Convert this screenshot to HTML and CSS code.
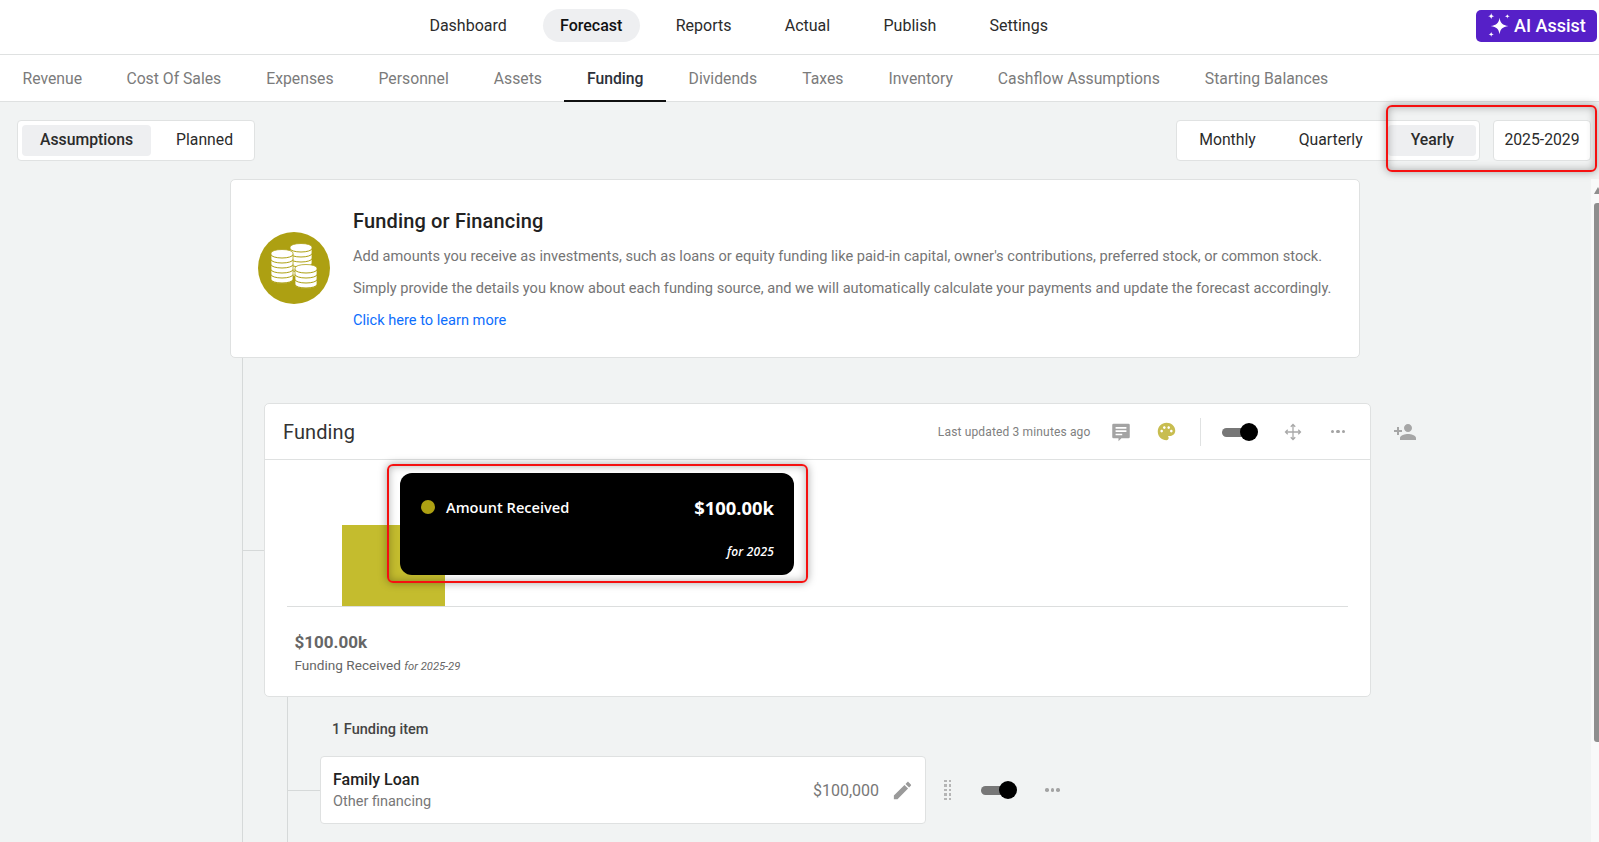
FILE: index.html
```html
<!DOCTYPE html>
<html lang="en">
<head>
<meta charset="utf-8">
<title>Forecast - Funding</title>
<link rel="stylesheet" href="styles.css">
</head>
<body>
<header class="topbar">
  <nav class="mainnav">
    <a class="mainnav-item">Dashboard</a>
    <a class="mainnav-item is-active">Forecast</a>
    <a class="mainnav-item">Reports</a>
    <a class="mainnav-item">Actual</a>
    <a class="mainnav-item">Publish</a>
    <a class="mainnav-item">Settings</a>
  </nav>
  <button class="ai-btn">
    <svg class="ai-icon" viewBox="0 0 24 24"><path d="M13 4.500c.9 5.300 2.600 7 8.500 8-5.900 1-7.600 2.700-8.500 8-.9-5.300-2.600-7-8.500-8 5.900-1 7.600-2.700 8.500-8z"/><path d="M5 0c.3 2 .9 2.700 3 3-2.100.3-2.700 1-3 3-.3-2-.9-2.700-3-3 2.100-.3 2.700-1 3-3z"/><path d="M20.500 1c.2 1.400.7 1.900 2.500 2.200-1.800.3-2.300.8-2.500 2.200-.2-1.400-.7-1.900-2.500-2.200 1.800-.3 2.300-.8 2.500-2.200z"/><path d="M5 18c.2 1.500.7 2 2.500 2.500C5.700 21 5.200 21.500 5 23c-.2-1.500-.7-2-2.500-2.500C4.300 20 4.800 19.500 5 18z"/></svg>
    AI Assist
  </button>
</header>

<nav class="subnav">
  <a class="subnav-item">Revenue</a>
  <a class="subnav-item">Cost Of Sales</a>
  <a class="subnav-item">Expenses</a>
  <a class="subnav-item">Personnel</a>
  <a class="subnav-item">Assets</a>
  <a class="subnav-item is-active">Funding</a>
  <a class="subnav-item">Dividends</a>
  <a class="subnav-item">Taxes</a>
  <a class="subnav-item">Inventory</a>
  <a class="subnav-item">Cashflow Assumptions</a>
  <a class="subnav-item">Starting Balances</a>
</nav>

<section class="toolbar">
  <div class="segment">
    <span class="segment-item is-active">Assumptions</span>
    <span class="segment-item">Planned</span>
  </div>
  <div class="toolbar-right">
    <div class="segment">
      <span class="segment-item">Monthly</span>
      <span class="segment-item">Quarterly</span>
      <span class="segment-item segment-item-wide is-active">Yearly</span>
    </div>
    <div class="year-box">2025-2029</div>
  </div>
</section>

<section class="info-card">
  <svg class="coins" viewBox="0 0 72 72">
    <defs>
      <g id="coin-stack">
        <path class="coin-body" d="M0 0v27a11 3.500 0 0 0 22 0V0a11 3.500 0 0 0-22 0z"/>
        <path class="coin-line" d="M0 1.500a11 3.500 0 0 0 22 0M0 6.500a11 3.500 0 0 0 22 0M0 11.500a11 3.500 0 0 0 22 0M0 16.500a11 3.500 0 0 0 22 0M0 21.500a11 3.500 0 0 0 22 0M0 26.500a11 3.500 0 0 0 22 0"/>
      </g>
    </defs>
    <circle cx="36" cy="36" r="36" class="coin-bg"/>
    <use href="#coin-stack" x="32" y="15"/>
    <use href="#coin-stack" x="13" y="21"/>
    <path class="coin-body" d="M37 36v17a11 3.500 0 0 0 22 0V36a11 3.500 0 0 0-22 0z"/>
    <path class="coin-line" d="M37 37.500a11 3.500 0 0 0 22 0M37 42.500a11 3.500 0 0 0 22 0M37 47.500a11 3.500 0 0 0 22 0M37 52.500a11 3.500 0 0 0 22 0"/>
  </svg>
  <div class="info-text">
    <h1 class="info-title">Funding or Financing</h1>
    <p class="info-line">Add amounts you receive as investments, such as loans or equity funding like paid-in capital, owner's contributions, preferred stock, or common stock.</p>
    <p class="info-line">Simply provide the details you know about each funding source, and we will automatically calculate your payments and update the forecast accordingly.</p>
    <a class="info-link">Click here to learn more</a>
  </div>
</section>

<main class="tree">
  <div class="panel-row">
    <section class="panel">
      <header class="panel-head">
        <h2 class="panel-title">Funding</h2>
        <div class="panel-tools">
          <span class="updated">Last updated 3 minutes ago</span>
          <svg class="icon icon-comment" viewBox="0 0 24 24"><path fill-rule="evenodd" d="M3 2h18a1.500 1.500 0 0 1 1.500 1.500v14.500a1.500 1.500 0 0 1-1.500 1.500h-8.500l-3.500 3.500v-3.500H3A1.500 1.500 0 0 1 1.500 18V3.500A1.500 1.500 0 0 1 3 2zm2.500 4v2h13V6zm0 4v2h13v-2zm0 4v2h8v-2z"/></svg>
          <svg class="icon icon-palette" viewBox="0 0 24 24"><path d="M12 2C6.490 2 2 6.490 2 12s4.490 10 10 10c1.380 0 2.500-1.120 2.500-2.500 0-.61-.23-1.200-.64-1.670-.08-.1-.13-.21-.13-.33 0-.28.22-.5.5-.5H16c3.310 0 6-2.690 6-6 0-4.960-4.490-9-10-9zm5.500 11c-.83 0-1.500-.67-1.500-1.500s.67-1.500 1.500-1.500 1.500.67 1.500 1.500-.67 1.500-1.500 1.500zm-3-4c-.83 0-1.500-.67-1.500-1.500S13.670 6 14.500 6s1.500.67 1.500 1.500S15.330 9 14.500 9zM5 11.500c0-.83.67-1.500 1.500-1.500s1.500.67 1.500 1.500S7.330 13 6.500 13 5 12.330 5 11.500zm6-4c0 .83-.67 1.500-1.500 1.500S8 8.330 8 7.500 8.670 6 9.500 6s1.500.67 1.500 1.500z"/></svg>
          <span class="tools-divider"></span>
          <span class="toggle"><span class="toggle-knob"></span></span>
          <svg class="icon icon-move" viewBox="0 0 24 24"><path d="M12 2v20M2 12h20M9 5l3-3 3 3M9 19l3 3 3-3M5 9l-3 3 3 3M19 9l3 3-3 3"/></svg>
          <span class="dots"><i></i><i></i><i></i></span>
        </div>
      </header>
      <div class="chart">
        <div class="plot"><div class="bar"></div></div>
        <div class="tooltip">
          <div class="tooltip-top">
            <span class="tooltip-dot"></span>
            <span class="tooltip-label">Amount Received</span>
            <span class="tooltip-value">$100.00k</span>
          </div>
          <div class="tooltip-period">for 2025</div>
        </div>
        <div class="highlight highlight-tooltip"></div>
      </div>
      <div class="summary">
        <div class="summary-value">$100.00k</div>
        <div class="summary-label">Funding Received <em>for 2025-29</em></div>
      </div>
    </section>
    <svg class="icon icon-person" viewBox="0 0 24 24"><path d="M15 12c2.210 0 4-1.790 4-4s-1.790-4-4-4-4 1.790-4 4 1.790 4 4 4zm-9-2V7H4v3H1v2h3v3h2v-3h3v-2H6zm9 4c-2.670 0-8 1.340-8 4v2h16v-2c0-2.660-5.330-4-8-4z"/></svg>
  </div>

  <div class="items">
    <div class="items-count">1 Funding item</div>
    <div class="item-row">
      <article class="item-card">
        <div>
          <div class="item-name">Family Loan</div>
          <div class="item-type">Other financing</div>
        </div>
        <div class="item-right">
          <span class="item-amount">$100,000</span>
          <svg class="icon icon-edit" viewBox="0 0 24 24"><path d="M3 17.250V21h3.750L17.810 9.940l-3.750-3.750L3 17.250zM20.710 7.040c.39-.39.39-1.020 0-1.410l-2.340-2.340c-.39-.39-1.020-.39-1.410 0l-1.830 1.830 3.750 3.750 1.830-1.830z"/></svg>
        </div>
      </article>
      <span class="drag"><i></i><i></i><i></i><i></i><i></i><i></i><i></i><i></i><i></i><i></i></span>
      <span class="toggle toggle-item"><span class="toggle-knob"></span></span>
      <span class="dots dots-item"><i></i><i></i><i></i></span>
    </div>
  </div>
</main>

<div class="highlight highlight-year"></div>
<div class="scrollbar"><span class="scroll-arrow"></span><span class="scroll-thumb"></span></div>
</body>
</html>
```
FILE: styles.css
```css
* { box-sizing: border-box; }
html, body { height: 842px; overflow: hidden; }
body {
  margin: 0;
  position: relative;
  background: #f1f3f3;
  font-family: Roboto, "Liberation Sans", sans-serif;
  font-size: 16px;
  color: #222;
}

.topbar {
  height: 55px;
  background: #fff;
  border-bottom: 1px solid #dfe1e1;
  display: flex;
  align-items: center;
  padding: 0 2px 3px 412px;
}
.mainnav { display: flex; gap: 18.500px; }
.mainnav-item {
  height: 33px;
  line-height: 33px;
  padding: 0 17.400px;
  border-radius: 17px;
  color: #2b2b2b;
}
.mainnav-item.is-active { background: #eeeff1; font-weight: 500; color: #111; }
.ai-btn {
  margin-left: auto;
  width: 121px;
  height: 32px;
  border: 0;
  border-radius: 5px;
  background: #5620c8;
  color: #fff;
  font: 500 18px Roboto, sans-serif;
  display: flex;
  align-items: center;
  gap: 3px;
  padding: 0 0 0 10px;
  white-space: nowrap;
}
.ai-icon { width: 25px; height: 25px; fill: #fff; flex: none; }

.subnav {
  height: 47px;
  background: #fff;
  border-bottom: 1px solid #dfe1e1;
  display: flex;
}
.subnav-item {
  height: 47px;
  line-height: 47px;
  padding: 0 22.500px;
  font-size: 15.750px;
  color: #7b7b7b;
}
.subnav-item:first-child { padding-right: 21.800px; }
.subnav-item.is-active {
  color: #2c303a;
  font-weight: 500;
  border-bottom: 2px solid #111;
}

.toolbar {
  display: flex;
  justify-content: space-between;
  padding: 18px 8px 18px 17px;
}
.toolbar-right { display: flex; gap: 13px; }
.segment {
  height: 41px;
  background: #fff;
  border: 1px solid #e0e2e2;
  border-radius: 4px;
  padding: 4px 3px 4px 4px;
  display: flex;
  gap: 7px;
  font-size: 15.750px;
}
.segment-item {
  line-height: 30px;
  height: 31px;
  padding: 0 18px;
  border-radius: 4px;
  color: #2b2b2b;
}
.segment-item-wide { padding: 0 22px 0 23px; }
.segment-item.is-active { background: #eeeff1; font-weight: 500; }
.year-box {
  height: 41px;
  width: 98px;
  background: #fff;
  border: 1px solid #e0e2e2;
  border-radius: 4px;
  line-height: 37px;
  text-align: center;
  font-size: 15.750px;
  color: #2b2b2b;
}

.info-card {
  margin-left: 230px;
  width: 1130px;
  height: 179px;
  background: #fff;
  border: 1px solid #dfe1e1;
  border-radius: 5px;
  display: flex;
  align-items: center;
  padding: 0 0 0 27px;
  gap: 23px;
}
.coins { width: 72px; height: 72px; flex: none; margin-top: -2px; }
.coin-bg { fill: #ada012; }
.coin-body { fill: #fff; stroke: #ada012; stroke-width: .8; }
.coin-line { fill: none; stroke: #ada012; stroke-width: 1; }
.info-text { align-self: flex-start; padding-top: 27px; }
.info-title { margin: 0 0 5px; font-size: 20px; line-height: 28px; font-weight: 500; letter-spacing: .15px; color: #222; }
.info-line { margin: 0; font-size: 14.600px; line-height: 32px; color: #757575; white-space: nowrap; }
.info-link { display: block; font-size: 14.600px; line-height: 32px; color: #0d6efd; }

.tree {
  margin-left: 242px;
  border-left: 1px solid #d6d9d9;
  padding: 45px 0 0 21px;
  height: 490px;
}
.panel-row { display: flex; align-items: flex-start; gap: 22px; }
.panel {
  width: 1107px;
  height: 294px;
  background: #fff;
  border: 1px solid #dfe1e1;
  border-radius: 5px;
  position: relative;
}
.panel::before {
  content: "";
  position: absolute;
  left: -22px;
  top: 146px;
  width: 21px;
  border-top: 1px solid #d6d9d9;
}
.panel-head {
  height: 56px;
  border-bottom: 1px solid #dfe1e1;
  display: flex;
  align-items: center;
  justify-content: space-between;
  padding: 0 25px 0 18px;
}
.panel-title { margin: 0; font-size: 20px; font-weight: 400; letter-spacing: .1px; color: #333; }
.panel-tools { display: flex; align-items: center; }
.updated { font-size: 12px; color: #808080; margin-right: 20px; letter-spacing: .15px; }
.icon { display: block; flex: none; }
.icon-comment { width: 20px; height: 20px; fill: #a3a3a3; }
.icon-palette { width: 21px; height: 21px; fill: #c8bd50; margin-left: 25px; }
.tools-divider { width: 1px; height: 28px; background: #e0e2e2; margin: 0 21px 0 23px; }
.toggle { display: block; width: 36px; height: 18px; position: relative; flex: none; }
.toggle::before {
  content: "";
  position: absolute;
  left: 0; top: 5px;
  width: 24px; height: 9px;
  border-radius: 5px;
  background: #777;
}
.toggle-knob {
  position: absolute;
  right: 0; top: 0;
  width: 18px; height: 18px;
  border-radius: 50%;
  background: #000;
}
.icon-move { width: 18px; height: 18px; fill: none; stroke: #a9a9a9; stroke-width: 1.700; margin: 0 0 0 26px; }
.dots { display: flex; gap: 2px; margin-left: 29px; }
.dots i { width: 3.500px; height: 3.500px; border-radius: 50%; background: #a3a3a3; }

.chart { position: relative; height: 147px; padding: 0 22px; }
.plot {
  height: 147px;
  border-bottom: 1px solid #dcdede;
  display: flex;
  align-items: flex-end;
  padding-left: 55px;
}
.bar { width: 103px; height: 81px; background: #c4bc2e; }
.tooltip {
  position: absolute;
  left: 135px;
  top: 13px;
  width: 394px;
  height: 102px;
  padding: 21px 20px 0 21px;
  background: #000;
  border-radius: 12px;
  color: #fff;
  font-family: "Open Sans", sans-serif;
}
.tooltip-top { display: flex; align-items: center; height: 26px; }
.tooltip-dot { width: 14px; height: 14px; border-radius: 50%; background: #ada012; margin-right: 11px; }
.tooltip-label { font-size: 14.600px; font-weight: 600; }
.tooltip-value { margin-left: auto; font-size: 18.400px; font-weight: 700; }
.tooltip-period { margin-top: 22px; text-align: right; font-size: 12px; font-style: italic; font-weight: 600; letter-spacing: .2px; line-height: 20px; }
.highlight {
  position: absolute;
  border: 2px solid #f51010;
  border-radius: 6px;
  box-shadow: 0 0 9px rgba(0,0,0,.35), inset 0 0 9px rgba(0,0,0,.3);
  pointer-events: none;
}
.highlight-tooltip { left: 122px; top: 4px; width: 421px; height: 119px; }
.highlight-year { left: 1386px; top: 105px; width: 211px; height: 67px; }
.summary { padding: 24px 0 0 29.500px; }
.summary-value { font-size: 17px; line-height: 23px; font-weight: 700; color: #666; }
.summary-label { font-size: 13.600px; line-height: 22px; color: #666; }
.summary-label em { font-size: 11.200px; }
.icon-person { width: 24px; height: 24px; fill: #a6a6a6; margin: 17px 0 0 0; }

.items {
  margin-left: 23px;
  border-left: 1px solid #d6d9d9;
  padding: 23px 0 0 32px;
  height: 146px;
}
.items-count { font-size: 14.500px; line-height: 20px; font-weight: 500; color: #444; margin: 0 0 16px 12px; }
.item-row { display: flex; align-items: center; }
.item-card {
  width: 606px;
  height: 68px;
  background: #fff;
  border: 1px solid #dfe1e1;
  border-radius: 4px;
  display: flex;
  align-items: center;
  justify-content: space-between;
  padding: 0 11px 0 12px;
  position: relative;
}
.item-card::before {
  content: "";
  position: absolute;
  left: -33px;
  top: 33px;
  width: 32px;
  border-top: 1px solid #d6d9d9;
}
.item-name { font-size: 16px; line-height: 24px; font-weight: 500; color: #222; }
.item-type { font-size: 14.500px; line-height: 20px; color: #777; }
.item-right { display: flex; align-items: center; gap: 12px; }
.item-amount { font-size: 16px; color: #777; }
.icon-edit { width: 23px; height: 23px; fill: #9a9a9a; }
.drag {
  display: grid;
  grid-template-columns: 2.500px 2.500px;
  gap: 2px;
  margin-left: 18px;
}
.drag i { width: 2.500px; height: 2.500px; background: #b5b5b5; }
.toggle-item { margin-left: 30px; }
.dots-item { margin-left: 28px; }

.scrollbar {
  position: absolute;
  right: 0;
  top: 179px;
  width: 8px;
  height: 663px;
  background: #f8f9f9;
  padding-left: 3px;
}
.scroll-arrow {
  display: block;
  margin-top: 8px;
  width: 0;
  height: 0;
  border-left: 4px solid transparent;
  border-right: 4px solid transparent;
  border-bottom: 7px solid #8e8e8e;
}
.scroll-thumb {
  display: block;
  margin-top: 9px;
  width: 5px;
  height: 539px;
  background: #8e8e8e;
  border-radius: 3px 0 0 3px;
}
```
